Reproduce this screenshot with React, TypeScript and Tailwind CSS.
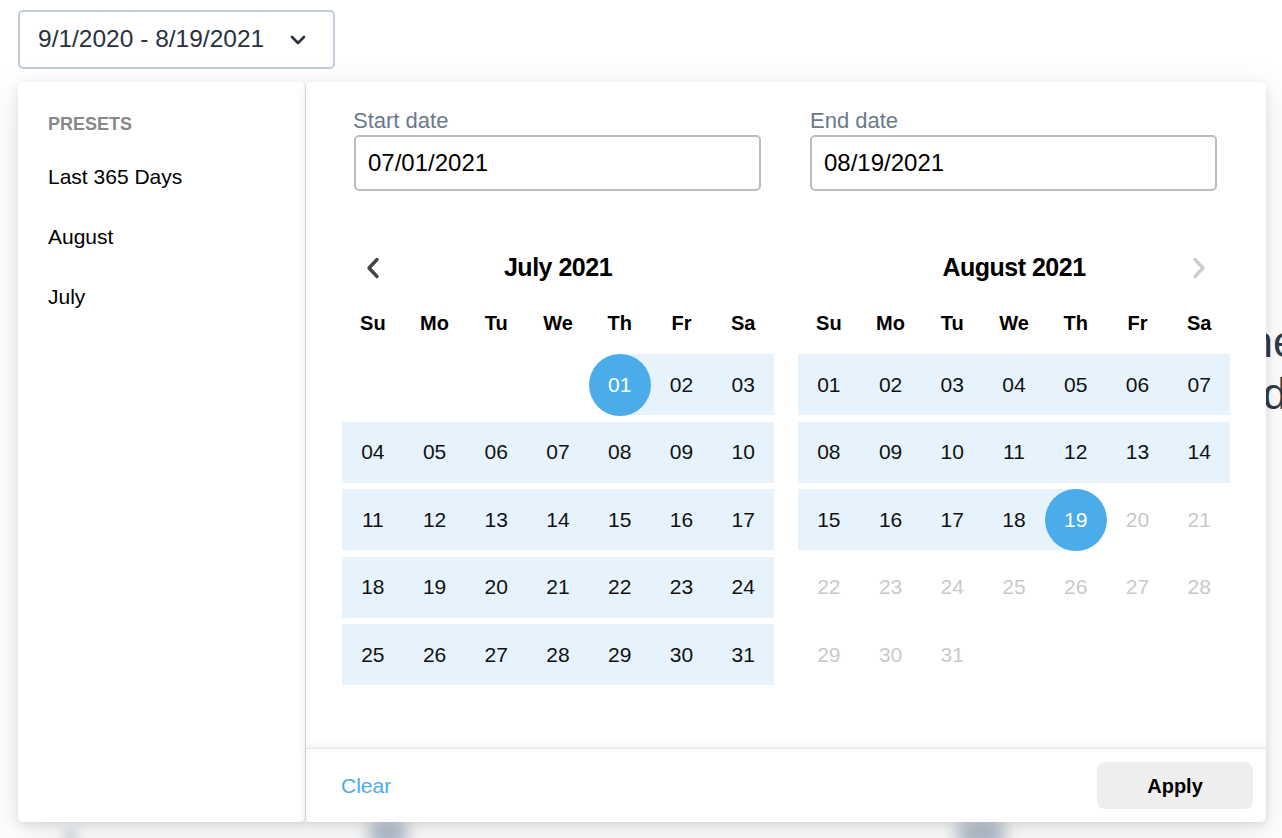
import React from "react";

type Cell = { d: number | null; kind: "empty" | "in" | "start" | "end" | "out" };

function buildMonth(firstDow: number, days: number, rangeFn: (d: number) => Cell["kind"]): Cell[][] {
  const cells: Cell[] = [];
  for (let i = 0; i < firstDow; i++) cells.push({ d: null, kind: "empty" });
  for (let d = 1; d <= days; d++) cells.push({ d, kind: rangeFn(d) });
  while (cells.length % 7 !== 0) cells.push({ d: null, kind: "empty" });
  const rows: Cell[][] = [];
  for (let i = 0; i < cells.length; i += 7) rows.push(cells.slice(i, i + 7));
  return rows;
}

const july = buildMonth(4, 31, (d) => (d === 1 ? "start" : "in"));
const august = buildMonth(0, 31, (d) => (d < 19 ? "in" : d === 19 ? "end" : "out"));

const WEEK = ["Su", "Mo", "Tu", "We", "Th", "Fr", "Sa"];

function pad(n: number) {
  return n < 10 ? "0" + n : String(n);
}

function DayCell({ c }: { c: Cell }) {
  let bg = "";
  if (c.kind === "in") bg = "bg-[#e6f3fc]";
  if (c.kind === "start") bg = "bg-[linear-gradient(to_right,transparent_50%,#e6f3fc_50%)]";
  if (c.kind === "end") bg = "bg-[linear-gradient(to_right,#e6f3fc_50%,transparent_50%)]";
  return (
    <div className={`relative h-[61px] flex items-center justify-center ${bg}`}>
      {c.d !== null && (c.kind === "start" || c.kind === "end") ? (
        <div className="w-[62px] h-[62px] rounded-full bg-[#4aace8] flex items-center justify-center text-white text-[21px]">
          {pad(c.d)}
        </div>
      ) : c.d !== null ? (
        <span className={`text-[21px] ${c.kind === "out" ? "text-[#c9c9cd]" : "text-[#111111]"}`}>{pad(c.d)}</span>
      ) : null}
    </div>
  );
}

function Month({ title, rows, prev, next }: { title: string; rows: Cell[][]; prev?: boolean; next?: boolean }) {
  return (
    <div className="w-[432px]">
      <div className="relative h-[40px] flex items-center justify-center">
        {prev && (
          <div className="absolute left-0 top-0 w-[62px] h-[40px] flex items-center justify-center">
            <svg width="16" height="22" viewBox="0 0 16 22" fill="none">
              <path d="M12 2.5 L4 11 L12 19.5" stroke="#444444" strokeWidth="3.4" strokeLinecap="round" strokeLinejoin="round" />
            </svg>
          </div>
        )}
        {next && (
          <div className="absolute right-0 top-0 w-[62px] h-[40px] flex items-center justify-center">
            <svg width="16" height="22" viewBox="0 0 16 22" fill="none">
              <path d="M4 2.5 L12 11 L4 19.5" stroke="#cccccc" strokeWidth="3.4" strokeLinecap="round" strokeLinejoin="round" />
            </svg>
          </div>
        )}
        <span className="text-[25px] font-bold tracking-[-0.5px] text-black">{title}</span>
      </div>
      <div className="mt-[20px] grid grid-cols-7 h-[30px] items-center">
        {WEEK.map((w) => (
          <div key={w} className="text-center text-[20px] font-bold text-black">
            {w}
          </div>
        ))}
      </div>
      <div className="mt-[16px] flex flex-col gap-[6.5px]">
        {rows.map((r, i) => (
          <div key={i} className="grid grid-cols-7">
            {r.map((c, j) => (
              <DayCell key={j} c={c} />
            ))}
          </div>
        ))}
      </div>
    </div>
  );
}

export default function App() {
  return (
    <div className="relative w-[1282px] h-[838px] overflow-hidden bg-white font-['Liberation_Sans',Arial,sans-serif]">
      {/* background content peeking behind the popover */}
      <div className="absolute left-[1224px] top-[316px] text-[44px] leading-[52px] text-[#2f3b48] whitespace-nowrap">one</div>
      <div className="absolute left-[1253px] top-[368px] text-[44px] leading-[52px] text-[#2f3b48] whitespace-nowrap">ld</div>
      <div className="absolute left-[368px] top-[820px] w-[40px] h-[30px] rounded-full bg-[#aebccb] blur-[8px]" />
      <div className="absolute left-[956px] top-[820px] w-[50px] h-[30px] rounded-full bg-[#b0bdcb] blur-[8px]" />
      <div className="absolute left-[62px] top-[828px] w-[18px] h-[20px] rounded-full bg-[#dde3e9] blur-[5px]" />

      {/* trigger */}
      <div className="pt-[10px] pl-[18px]">
        <div className="w-[317px] h-[59px] border-2 border-[#c3cdd7] rounded-[5px] flex items-center justify-between pl-[18px] pr-[27px] bg-white">
          <span className="text-[24.5px] text-[#28323e]">9/1/2020 - 8/19/2021</span>
          <svg width="16" height="10" viewBox="0 0 16 10" fill="none">
            <path d="M2 2 L8 8 L14 2" stroke="#28323e" strokeWidth="2.6" strokeLinecap="round" strokeLinejoin="round" />
          </svg>
        </div>
      </div>

      {/* popover */}
      <div className="relative z-10 ml-[18px] mt-[13px] flex h-[740px] w-[1248px] rounded-[5px] shadow-[0_10px_40px_rgba(0,0,0,0.10)]">
        <div className="w-[288px] h-full bg-white rounded-[5px] border-r border-[#d7dde3] shadow-[0_3px_10px_rgba(0,0,0,0.10)] pl-[30px] pt-[32px]">
          <div className="text-[18px] font-bold text-[#888888] leading-[20px]">PRESETS</div>
          <div className="mt-[31px] flex flex-col gap-[36px]">
            <div className="text-[21px] leading-[24px] text-black">Last 365 Days</div>
            <div className="text-[21px] leading-[24px] text-black">August</div>
            <div className="text-[21px] leading-[24px] text-black">July</div>
          </div>
        </div>

        <div className="w-[960px] h-full bg-white rounded-[5px] shadow-[0_3px_10px_rgba(0,0,0,0.10)] flex flex-col">
          <div className="flex-1 px-[36px]">
            <div className="grid grid-cols-2 gap-[49px] pl-[12px] pr-[13px] pt-[27px]">
              <div>
                <div className="text-[22px] leading-[24px] text-[#687a8b] -ml-[1px]">Start date</div>
                <div className="mt-[2px] h-[56px] border-2 border-[#bdbdbd] rounded-[5px] flex items-center pl-[12px] text-[24px] text-black">
                  07/01/2021
                </div>
              </div>
              <div>
                <div className="text-[22px] leading-[24px] text-[#687a8b]">End date</div>
                <div className="mt-[2px] h-[56px] border-2 border-[#bdbdbd] rounded-[5px] flex items-center pl-[12px] text-[24px] text-black">
                  08/19/2021
                </div>
              </div>
            </div>
            <div className="mt-[57px] flex gap-[24px]">
              <Month title="July 2021" rows={july} prev />
              <Month title="August 2021" rows={august} next />
            </div>
          </div>
          <div className="h-[74px] border-t border-[#e3e3e3] shadow-[0_-3px_5px_rgba(0,0,0,0.05)] flex items-center justify-between pl-[35px] pr-[13px]">
            <span className="text-[21px] text-[#4aace8]">Clear</span>
            <div className="w-[156px] h-[47px] rounded-[8px] bg-[#eeeeee] flex items-center justify-center text-[20px] font-bold text-black">
              Apply
            </div>
          </div>
        </div>
      </div>
    </div>
  );
}
